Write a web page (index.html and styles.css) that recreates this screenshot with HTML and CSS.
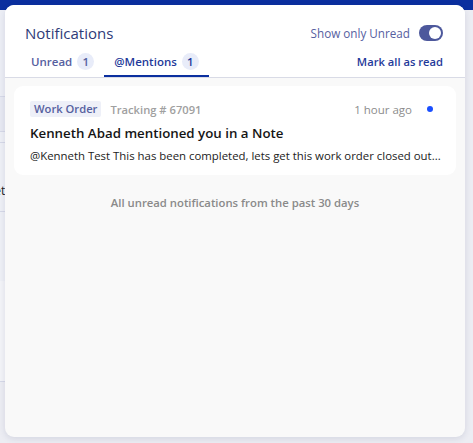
FILE: index.html
```html
<!DOCTYPE html>
<html lang="en">
  <head>
    <meta charset="UTF-8" />
    <title>Notifications</title>
    <link rel="stylesheet" href="styles.css">
  </head>
  <body>
    <div class="topbar"></div>
    <div class="app">
      <div class="app-row head"><span>Details</span></div>
      <div class="app-row field"></div>
      <div class="app-row label"></div>
      <div class="app-row value">
        <span class="lbl">Status:</span>
        <span class="val">Complet</span>
      </div>
      <div class="app-row empty"></div>
      <div class="app-row rest"></div>
    </div>

    <!-- notifications dropdown -->
    <div class="panel">
      <div class="panel-head">
        <div class="title-row">
          <h3>Notifications</h3>
          <label class="toggle-wrap">
            Show only Unread
            <span class="toggle"><span class="knob"></span></span>
          </label>
        </div>
        <div class="tab-row">
          <div class="tab">Unread <span class="badge">1</span></div>
          <div class="tab active">@Mentions <span class="badge">1</span></div>
          <a class="mark-read">Mark all as read</a>
        </div>
      </div>

      <div class="panel-body">
        <div class="card">
          <div class="card-meta">
            <span class="tag">Work Order</span>
            <span class="tracking">Tracking # 67091</span>
            <span class="time">1 hour ago</span>
            <span class="dot"></span>
          </div>
          <div class="card-title">Kenneth Abad mentioned you in a Note</div>
          <div class="card-text">@Kenneth Test This has been completed, lets get this work order closed out...</div>
        </div>
        <p class="footnote">All unread notifications from the past 30 days</p>
      </div>
    </div>
  </body>
</html>
```

FILE: styles.css
```css
body {
  font-family: 'Open Sans', 'Noto Sans', sans-serif;
  background-color: #ecedf3;
  margin: 0;
  width: 473px;
  height: 443px;
  overflow: hidden;
  position: relative;
}

.topbar {
  height: 10px;
  background-color: #0b2f9f;
}

.app {
  width: 60px;
  font-size: 12px;
}

.app-row {
  border-bottom: 1px solid #d6d9e8;
  white-space: nowrap;
  overflow: hidden;
}

.app-row.head {
  height: 86px;
  background-color: #eceef5;
}

.app-row.head span {
  display: block;
  margin: 43px 0 0 -40px;
  color: #3a5cb8;
  font-weight: 600;
}

.app-row.field {
  height: 34px;
  background-color: #e7e9f2;
}

.app-row.label {
  height: 10px;
  background-color: #eef0f6;
}

.app-row.value {
  height: 68px;
  background-color: #eef0f6;
}

.app-row.value span {
  display: block;
}

.app-row.value .lbl {
  margin: 4px 0 0 -38px;
  color: #8a93c4;
}

.app-row.value .val {
  margin: 18px 0 0 -42px;
  color: #222;
}

.app-row.empty {
  height: 69px;
  background-color: #eef0f6;
  border-bottom: none;
}

.app-row.rest {
  height: 100px;
  background-color: #f3f4f8;
}

.panel {
  position: absolute;
  top: 5px;
  left: 5px;
  width: 460px;
  height: 432px;
  background: #f9f9f9;
  border-radius: 9px;
  box-shadow: 0 2px 6px rgba(40, 50, 100, 0.12);
  overflow: hidden;
  display: flex;
  flex-direction: column;
}

.panel-head {
  background: white;
  border-bottom: 1px solid #d9dbe6;
  padding: 0 22px 0 16px;
}

.title-row {
  display: flex;
  align-items: center;
  justify-content: space-between;
  height: 31px;
  padding: 12px 0 0 4px;
}

.title-row h3 {
  margin: 0;
  font-size: 15px;
  font-weight: 400;
  color: #2e3a78;
}

.toggle-wrap {
  display: flex;
  align-items: center;
  gap: 9px;
  font-size: 11.7px;
  color: #56609f;
}

.toggle {
  width: 24px;
  height: 16px;
  border-radius: 8px;
  background-color: #4d589c;
  display: flex;
  align-items: center;
  justify-content: flex-end;
  padding: 0 2px;
  box-sizing: border-box;
}

.knob {
  width: 12px;
  height: 12px;
  border-radius: 50%;
  background: white;
}

.tab-row {
  display: flex;
  align-items: stretch;
  height: 29px;
}

.tab {
  display: flex;
  align-items: center;
  gap: 5px;
  padding: 0 10px;
  font-size: 11.5px;
  font-weight: 600;
  color: #56609f;
  border-bottom: 2px solid transparent;
}

.tab.active {
  color: #1f3a9a;
  border-bottom-color: #0b2f9f;
}

.badge {
  display: inline-flex;
  align-items: center;
  justify-content: center;
  min-width: 17px;
  height: 17px;
  border-radius: 9px;
  background-color: #e8ecf9;
  font-size: 11.5px;
}

.mark-read {
  margin-left: auto;
  align-self: center;
  margin-top: -2px;
  font-size: 11.2px;
  font-weight: 600;
  color: #1f3a9a;
  cursor: pointer;
}

.panel-body {
  flex: 1;
  padding: 8px 9px 0;
}

.card {
  background: white;
  border-radius: 9px;
  padding: 15px 16px 12px;
}

.card-meta {
  display: flex;
  align-items: center;
  height: 16px;
  font-size: 11.2px;
}

.tag {
  background-color: #eef0f8;
  color: #56609f;
  font-weight: 600;
  line-height: 16px;
  padding: 0 4px;
  border-radius: 2px;
}

.tracking {
  margin-left: 9px;
  color: #a0a0a0;
  font-weight: 600;
}

.time {
  margin-left: auto;
  font-size: 11.5px;
  color: #8c8c8c;
}

.dot {
  width: 6px;
  height: 6px;
  border-radius: 50%;
  background-color: #1a4fff;
  margin: 0 7px 0 15px;
}

.card-title {
  margin-top: 7px;
  font-size: 13.3px;
  font-weight: 600;
  color: #151515;
}

.card-text {
  margin-top: 6px;
  font-size: 11.4px;
  color: #222;
  white-space: nowrap;
}

.footnote {
  margin: 20px 0 0;
  text-align: center;
  font-size: 11.3px;
  font-weight: 600;
  color: #8a8a8a;
}
```
